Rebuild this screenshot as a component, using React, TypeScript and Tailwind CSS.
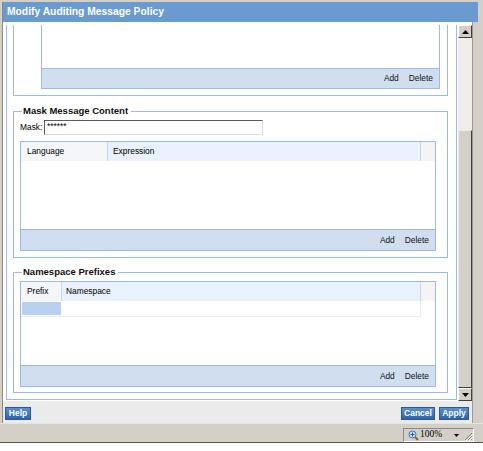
import React from "react";

function Toolbar({ className }: { className: string }) {
  return (
    <div className={`border-t border-[#99bbe8] bg-[#d0deef] flex items-center justify-end gap-[10px] pr-[6px] text-[#111] ${className}`}>
      <span>Add</span>
      <span>Delete</span>
    </div>
  );
}

function Legend({ children }: { children: React.ReactNode }) {
  return (
    <legend className="ml-[8px] pl-[1px] pr-[3px] text-[9.5px] leading-[12px] font-bold text-[#111]">
      {children}
    </legend>
  );
}

function ScrollButton({ up }: { up?: boolean }) {
  return (
    <div className="h-[13px] bg-[#d4d0c8] border border-t-white border-l-white border-r-[#404040] border-b-[#404040] flex items-center justify-center">
      <svg width="7" height="4" viewBox="0 0 7 4">
        {up ? <path d="M0 4 L3.5 0 L7 4 Z" fill="#000" /> : <path d="M0 0 L3.5 4 L7 0 Z" fill="#000" />}
      </svg>
    </div>
  );
}

function ZoomIcon() {
  return (
    <svg width="11" height="11" viewBox="0 0 11 11">
      <line x1="6" y1="6" x2="10" y2="10" stroke="#9a5b1e" strokeWidth="2" />
      <circle cx="4.5" cy="4.5" r="3.5" fill="#dbe9fb" stroke="#3a6fb7" strokeWidth="1" />
      <path d="M4.5 2.5 V6.5 M2.5 4.5 H6.5" stroke="#1d56b0" strokeWidth="1.2" />
    </svg>
  );
}

export default function App() {
  return (
    <div className="w-[483px] h-[451px] bg-white flex flex-col font-['Liberation_Sans',Arial,sans-serif] text-[8.4px] text-black">
      {/* browser frame */}
      <div className="h-[443px] bg-[#d4d0c8] border-b border-[#555] flex flex-col">
        <div className="h-[423px] pt-[2px] pl-[2px] pr-[5px] flex">
          <div className="flex-1 border-l border-[#8a8a8a] flex flex-col">
            {/* Title */}
            <div className="h-[20px] bg-[#6a9bd0] pl-[4px] flex items-center text-white font-bold text-[10.3px]">
              Modify Auditing Message Policy
            </div>

            <div className="flex-1 flex">
              <div className="flex-1 flex flex-col">
                <div className="h-[3px] bg-white" />

                <div className="h-[376px] flex">
                  {/* scrolled content */}
                  <div className="flex-1 bg-white overflow-hidden pl-[3px] pr-[1px]">
                    <div className="w-[451px] border-x border-b border-[#99bbe8] pb-[6px]">
                      {/* first section, top scrolled away */}
                      <div className="ml-[6px] w-[435px] border-x border-b border-[#99bbe8] pl-[27px] pr-[7px] pb-[6px]">
                        <div className="border-x border-b border-[#99bbe8] flex flex-col">
                          <div className="h-[43px] bg-white" />
                          <Toolbar className="h-[20px]" />
                        </div>
                      </div>

                      {/* Mask Message Content */}
                      <fieldset className="mt-[9px] ml-[6px] w-[435px] border border-[#99bbe8]">
                        <Legend>Mask Message Content</Legend>
                        <div className="pl-[6px] pr-[11px] pb-[6px]">
                          <div className="mt-[3px] flex items-center h-[15px]">
                            <span className="w-[22px]">Mask:</span>
                            <div className="ml-[2px] w-[219px] h-[15px] bg-white border border-t-[#5b5b5b] border-l-[#5b5b5b] border-r-[#dcdcdc] border-b-[#dcdcdc] pl-[2px] pt-[1px] text-[8.3px] leading-[9px]">
                              ******
                            </div>
                          </div>
                          <div className="mt-[6px] border border-[#99bbe8] flex flex-col">
                            <div className="h-[19px] flex">
                              <div className="w-[87px] border-r border-[#c3d7f0] bg-[#f5f6f8] pl-[6px] flex items-center">Language</div>
                              <div className="w-[313px] border-r border-[#c3d7f0] bg-[#e8f1fc] pl-[5px] flex items-center">Expression</div>
                              <div className="flex-1 bg-[#f4f4f4]" />
                            </div>
                            <div className="h-[68px] bg-white" />
                            <Toolbar className="h-[21px]" />
                          </div>
                        </div>
                      </fieldset>

                      {/* Namespace Prefixes */}
                      <fieldset className="mt-[8px] ml-[6px] w-[435px] border border-[#99bbe8]">
                        <Legend>Namespace Prefixes</Legend>
                        <div className="pl-[6px] pr-[11px] pb-[5px]">
                          <div className="mt-[3px] border border-[#99bbe8] flex flex-col">
                            <div className="h-[19px] flex">
                              <div className="w-[41px] border-r border-[#c3d7f0] bg-[#f5f6f8] pl-[6px] flex items-center">Prefix</div>
                              <div className="w-[359px] border-r border-[#c3d7f0] bg-[#e8f1fc] pl-[4px] flex items-center">Namespace</div>
                              <div className="flex-1 bg-[#f4f4f4]" />
                            </div>
                            <div className="h-[16px] w-[400px] flex border-b border-r border-[#ececec]">
                              <div className="w-[41px] p-[1px]">
                                <div className="h-full bg-[#b9d0f0]" />
                              </div>
                              <div className="flex-1 bg-white" />
                            </div>
                            <div className="h-[48px] bg-white" />
                            <Toolbar className="h-[21px]" />
                          </div>
                        </div>
                      </fieldset>
                    </div>
                  </div>

                  {/* scrollbar */}
                  <div className="w-[14px] flex flex-col">
                    <ScrollButton up />
                    <div className="h-[92px] bg-[#efeeea]" />
                    <div className="h-[258px] bg-[#d4d0c8] border border-t-[#ecebe6] border-l-[#ecebe6] border-r-[#404040] border-b-[#404040]" />
                    <ScrollButton />
                  </div>
                </div>

                {/* buttons */}
                <div className="h-[22px] bg-[#ebebeb] flex items-start justify-between pt-[6px] pl-[2px] pr-[3px]">
                  <button className="w-[26px] h-[13px] bg-linear-to-b from-[#5b8fcf] to-[#2e64a6] border border-[#28599a] text-white font-bold text-[8.5px] leading-none flex items-center justify-center">
                    Help
                  </button>
                  <div className="flex gap-[4px]">
                    <button className="w-[34px] h-[13px] bg-linear-to-b from-[#5b8fcf] to-[#2e64a6] border border-[#28599a] text-white font-bold text-[8.5px] leading-none flex items-center justify-center">
                      Cancel
                    </button>
                    <button className="w-[30px] h-[13px] bg-linear-to-b from-[#5b8fcf] to-[#2e64a6] border border-[#28599a] text-white font-bold text-[8.5px] leading-none flex items-center justify-center">
                      Apply
                    </button>
                  </div>
                </div>
              </div>
              <div className="w-[6px] bg-[#d4d0c8] border-l border-[#9a9a9a]" />
            </div>
          </div>
        </div>

        {/* status bar */}
        <div className="h-[19px] flex justify-end items-end pr-[9px] border-t border-[#e6e4de]">
          <div className="w-[71px] h-[14px] border border-t-[#8a8a8a] border-l-[#8a8a8a] border-r-white border-b-white flex items-center pl-[4px] relative">
            <ZoomIcon />
            <span className="ml-[1px] font-['Liberation_Serif',serif] text-[9.5px] leading-none">100%</span>
            <svg className="ml-[12px]" width="5" height="3" viewBox="0 0 5 3">
              <path d="M0 0 L2.5 3 L5 0 Z" fill="#000" />
            </svg>
            <svg className="absolute right-[0px] bottom-[0px]" width="9" height="9" viewBox="0 0 9 9">
              <path d="M8 1 L1 8 M8 4 L4 8 M8 7 L7 8" stroke="#8a8a8a" strokeWidth="1" />
              <path d="M9 2 L2 9 M9 5 L5 9" stroke="#ffffff" strokeWidth="1" />
            </svg>
          </div>
        </div>
      </div>
    </div>
  );
}
